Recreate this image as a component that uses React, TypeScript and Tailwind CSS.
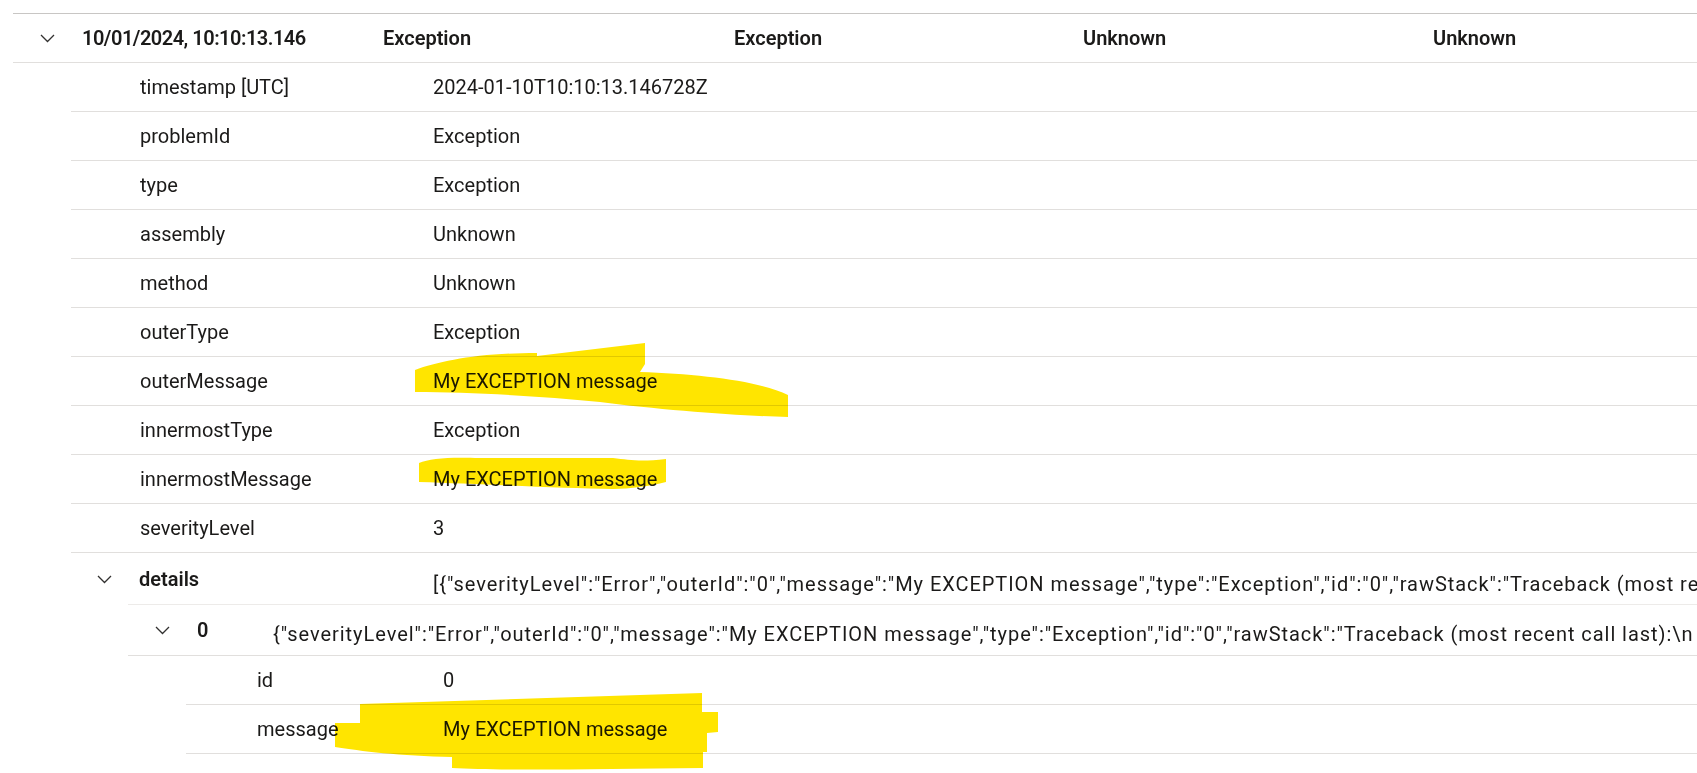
import React from 'react';

const FIELDS: [string, string][] = [
  ['timestamp [UTC]', '2024-01-10T10:10:13.146728Z'],
  ['problemId', 'Exception'],
  ['type', 'Exception'],
  ['assembly', 'Unknown'],
  ['method', 'Unknown'],
  ['outerType', 'Exception'],
  ['outerMessage', 'My EXCEPTION message'],
  ['innermostType', 'Exception'],
  ['innermostMessage', 'My EXCEPTION message'],
  ['severityLevel', '3'],
];

const DETAILS =
  '[{"severityLevel":"Error","outerId":"0","message":"My EXCEPTION message","type":"Exception","id":"0","rawStack":"Traceback (most recent call last):\\n  File \\"/app/main.py\\", line 12, in <module>"}]';
const ITEM_0 =
  '{"severityLevel":"Error","outerId":"0","message":"My EXCEPTION message","type":"Exception","id":"0","rawStack":"Traceback (most recent call last):\\n  File \\"/app/main.py\\", line 12, in <module>"}';

function Chevron() {
  return (
    <svg width="15" height="9" viewBox="0 0 15 9" fill="none" className="shrink-0">
      <path d="M1 1 L7.5 7.5 L14 1" stroke="#323130" strokeWidth="1.3" />
    </svg>
  );
}

function Highlights() {
  // marker strokes drawn over the screenshot
  return (
    <svg
      className="absolute left-0 top-0 pointer-events-none mix-blend-multiply"
      width="1697"
      height="773"
      viewBox="0 0 1697 773"
    >
      <g fill="#ffe500">
        <path d="M415,370 C440,361 478,353 537,353 L537,356 L645,343 L645,364 L640,372 C700,374 760,381 788,395 L788,417 C740,416 662,410 600,402 C540,396 470,392 415,392 Z" />
        <path d="M419,463 C430,458 450,457 480,458 L613,458 C630,460 640,462 666,459 L666,482 C650,486 630,489 613,489 C560,488 480,484 419,482 Z" />
        <path d="M335,723 L360,723 L360,704 L702,693 L702,712 L718,712 L718,732 L707,733 L707,752 L703,752 L703,768 C600,769 500,771 452,768 L452,757 C400,756 360,751 335,747 Z" />
      </g>
    </svg>
  );
}

export default function App() {
  return (
    <div className="relative w-[1697px] h-[773px] overflow-hidden bg-white text-[20px] text-[#1b1a19] font-['Segoe_UI',Roboto,sans-serif]">
      <div className="pt-[13px] pl-[13px] whitespace-nowrap">
        {/* Result row */}
        <div className="flex items-center h-[50px] border-t border-b border-t-[#c8c6c4] border-b-[#e1dfdd] font-semibold">
          <div className="w-[69px] pl-[27px] flex items-center">
            <Chevron />
          </div>
          <div className="w-[301px] tracking-[-0.5px]">10/01/2024, 10:10:13.146</div>
          <div className="w-[351px]">Exception</div>
          <div className="w-[349px]">Exception</div>
          <div className="w-[350px]">Unknown</div>
          <div>Unknown</div>
        </div>

        {/* Expanded fields */}
        <div className="ml-[58px]">
          {FIELDS.map(([k, v]) => (
            <div key={k} className="flex items-center h-[49px] border-b border-[#e1dfdd]">
              <div className="w-[362px] pl-[69px]">{k}</div>
              <div>{v}</div>
            </div>
          ))}

          {/* details */}
          <div className="flex h-[52px]">
            <div className="w-[57px] pl-[26px] flex items-center">
              <Chevron />
            </div>
            <div className="flex-1 flex items-center border-b border-[#edebe9] overflow-hidden">
              <div className="w-[305px] pl-[11px] font-semibold shrink-0">details</div>
              <div className="pt-[11px] tracking-[0.95px]">{DETAILS}</div>
            </div>
          </div>

          <div className="ml-[57px]">
            <div className="flex items-center h-[51px] border-b border-[#e1dfdd] overflow-hidden">
              <div className="w-[69px] pl-[27px] flex items-center shrink-0">
                <Chevron />
              </div>
              <div className="w-[76px] font-semibold shrink-0">0</div>
              <div className="pt-[8px] tracking-[0.95px]">{ITEM_0}</div>
            </div>

            <div className="ml-[58px]">
              <div className="flex items-center h-[49px] border-b border-[#e1dfdd]">
                <div className="w-[257px] pl-[71px]">id</div>
                <div>0</div>
              </div>
              <div className="flex items-center h-[49px] border-b border-[#e1dfdd]">
                <div className="w-[257px] pl-[71px]">message</div>
                <div>My EXCEPTION message</div>
              </div>
            </div>
          </div>
        </div>
      </div>
      <Highlights />
    </div>
  );
}
